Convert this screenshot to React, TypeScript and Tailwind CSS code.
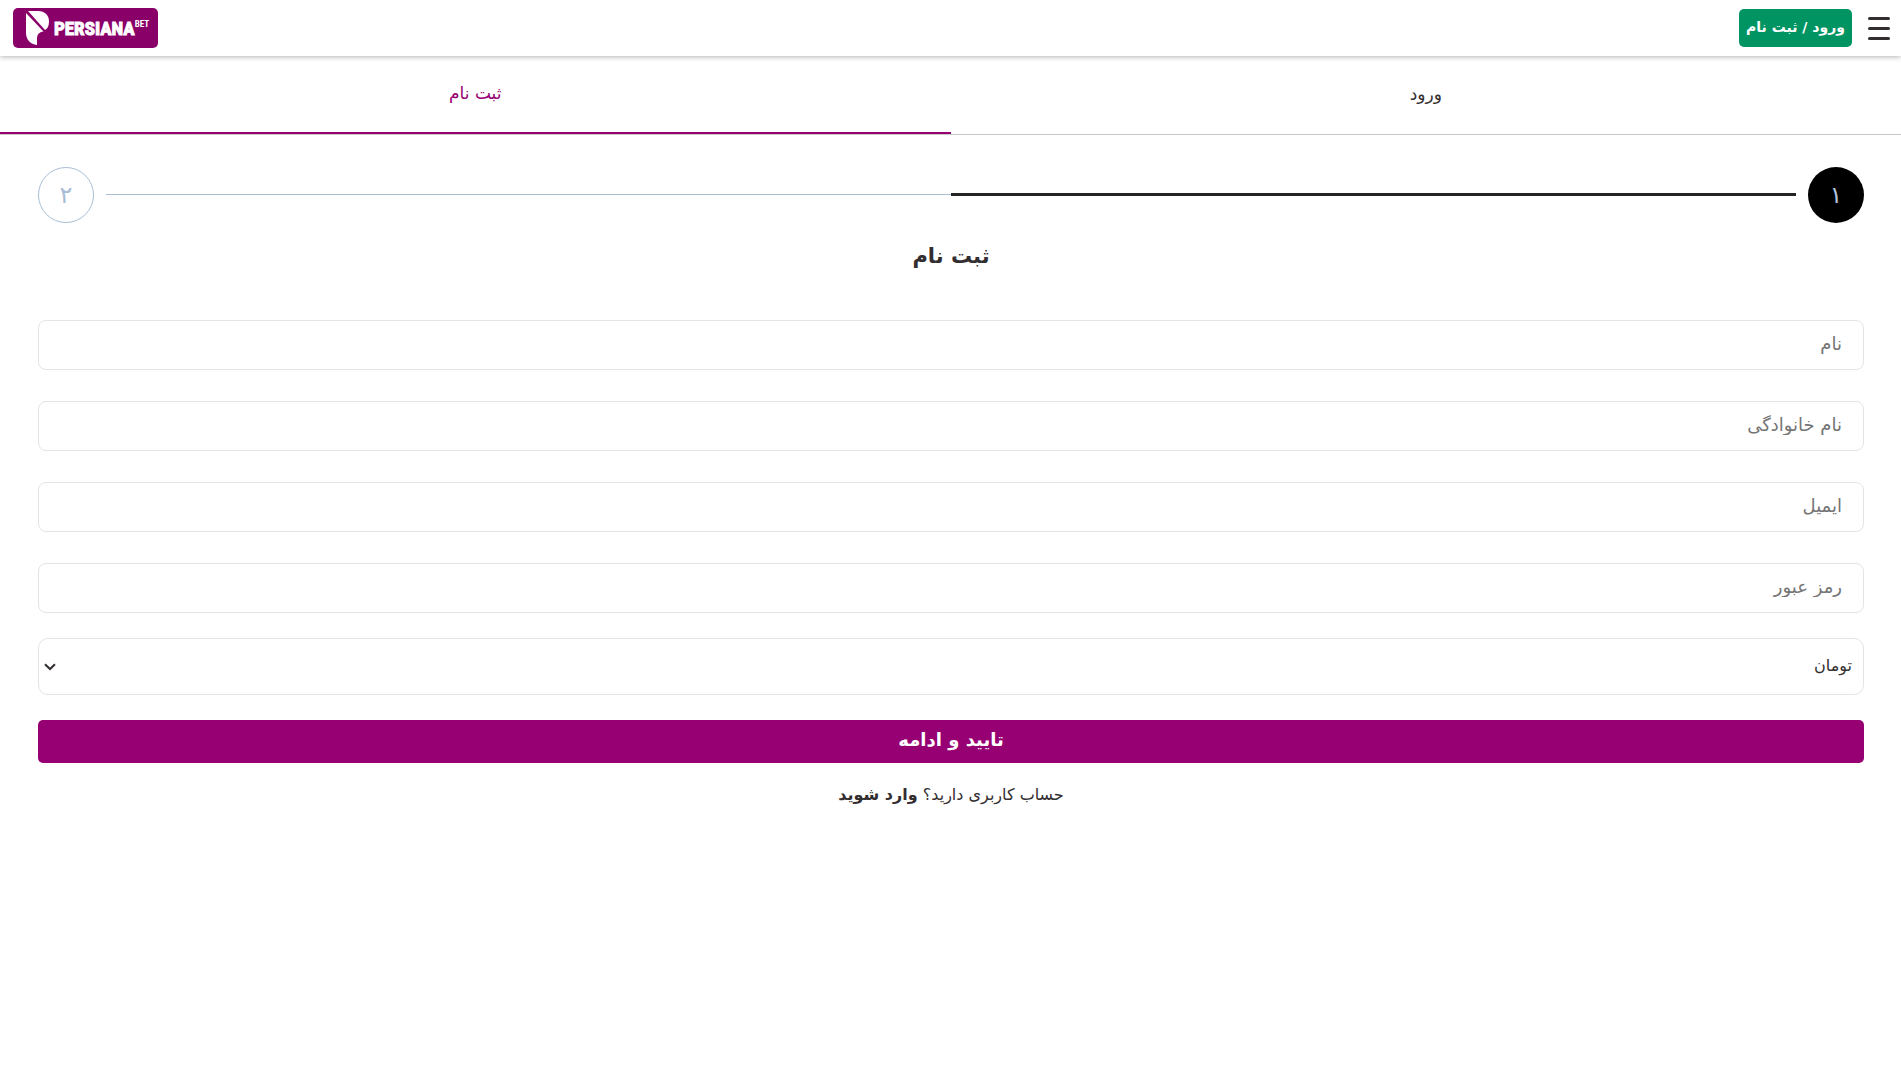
import React from "react";

const fields = [
  { id: "first-name", label: "نام", type: "text" },
  { id: "last-name", label: "نام خانوادگی", type: "text" },
  { id: "email", label: "ایمیل", type: "email" },
  { id: "password", label: "رمز عبور", type: "password" },
];

function Logo() {
  return (
    <a
      href="#"
      aria-label="PersianaBet"
      dir="ltr"
      className="flex h-10 w-[145px] items-center rounded-[5px] bg-[#8a0069] pl-[13px] font-['Liberation_Sans_Narrow','Roboto_Condensed',Roboto,sans-serif] leading-none font-bold text-white"
    >
      <svg viewBox="0 0 23 34" className="h-[34px] w-[23px] shrink-0" fill="#fff">
        <path d="M0 2 L17.500 20.500 C13 21 11 23.500 11 28 V34 C4.500 33.500 0 28.500 0 22 Z" />
        <path d="M2 0 H12 C19 0 23 4.500 23 10.500 C23 15 21.500 17.500 19 19 Z" />
      </svg>
      <span className="ml-[5px] pt-px text-[19px] [-webkit-text-stroke:1px_white]">PERSIANA</span>
      <span className="mb-2 text-[9px]">BET</span>
    </a>
  );
}

function Header() {
  return (
    <header className="relative flex h-14 items-center bg-white pr-[11px] pl-[13px] shadow-[0_1px_5px_rgba(0,0,0,0.3)]">
      <button type="button" aria-label="منو" className="flex h-[23px] w-[22px] flex-col justify-between">
        <span className="h-[3px] w-full rounded-full bg-[#332e30]" />
        <span className="h-[3px] w-full rounded-full bg-[#332e30]" />
        <span className="h-[3px] w-full rounded-full bg-[#332e30]" />
      </button>
      <button
        type="button"
        className="mr-4 flex h-[38px] w-[113px] items-center justify-center rounded-[5px] bg-[#009463] pb-[2px] text-sm font-bold whitespace-nowrap text-white"
      >
        ورود / ثبت نام
      </button>
      <div className="mr-auto">
        <Logo />
      </div>
    </header>
  );
}

function Tabs() {
  return (
    <nav className="grid h-[79px] grid-cols-2 border-b border-[#c8c8c8] text-center text-[17px]">
      <a href="#login" className="flex items-center justify-center">
        ورود
      </a>
      <a
        href="#register"
        className="flex items-center justify-center border-b-2 border-[#970072] text-[#970072]"
      >
        ثبت نام
      </a>
    </nav>
  );
}

function Stepper() {
  return (
    <div className="flex items-center gap-3 text-2xl">
      <div className="flex size-14 shrink-0 items-center justify-center rounded-full bg-black text-[#b0c4de]">
        ۱
      </div>
      <div className="flex flex-1 items-center pb-px">
        <div className="h-[3px] flex-1 bg-[#252324]" />
        <div className="h-px flex-1 bg-[#a9bdd5]" />
      </div>
      <div className="flex size-14 shrink-0 items-center justify-center rounded-full border border-[#a9bdd5] text-[#a9bdd5]">
        ۲
      </div>
    </div>
  );
}

export default function App() {
  return (
    <div dir="rtl" className="bg-white font-['DejaVu_Sans',sans-serif] text-[#332e30]">
      <Header />
      <Tabs />
      <main className="pt-8 pr-[37px] pl-[38px]">
        <Stepper />
        <h1 className="mt-[17px] text-center text-[21px] leading-8 font-bold">ثبت نام</h1>
        <form className="mt-12">
          <div className="flex flex-col gap-[31px]">
            {fields.map((f) => (
              <input
                key={f.id}
                id={f.id}
                type={f.type}
                dir="rtl"
                aria-label={f.label}
                placeholder={f.label}
                className="block h-[50px] w-full rounded-lg border border-[#e4e4e4] px-[21px] pb-1 text-lg leading-10 placeholder:text-[#757575]"
              />
            ))}
          </div>
          <div className="relative mt-[25px]">
            <select
              id="currency"
              aria-label="واحد پول"
              className="block h-[57px] w-full appearance-none rounded-[10px] border border-[#e4e4e4] bg-white px-[11px] pb-[2px] text-base text-[#332e30]"
            >
              <option>تومان</option>
            </select>
            <svg
              viewBox="0 0 12 8"
              className="pointer-events-none absolute top-[25px] left-[6px] h-2 w-3"
              fill="none"
              stroke="#332e30"
              strokeWidth="2"
            >
              <path d="M1 1.200 L6 6 L11 1.200" />
            </svg>
          </div>
          <button
            type="submit"
            className="mt-[25px] flex h-[43px] w-full items-center justify-center rounded-[5px] bg-[#970072] pb-1 text-lg font-bold text-white"
          >
            تایید و ادامه
          </button>
        </form>
        <p className="mt-5 text-center text-base">
          حساب کاربری دارید؟{" "}
          <a href="#login" className="font-bold">
            وارد شوید
          </a>
        </p>
      </main>
    </div>
  );
}
